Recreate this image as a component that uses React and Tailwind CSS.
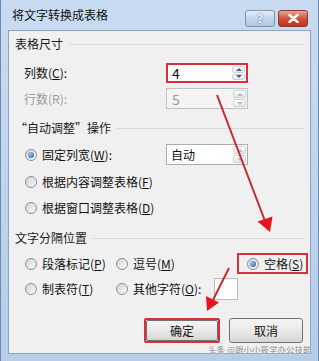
const font = { fontFamily: '"Noto Sans CJK SC", "Microsoft YaHei", sans-serif' };

function Radio({ checked }) {
  return (
    <span className="flex h-[12px] w-[12px] shrink-0 items-center justify-center rounded-full border border-[#8e8f8f] bg-gradient-to-br from-[#d2d2d2] to-[#fbfbfb]">
      {checked && (
        <span className="h-[6px] w-[6px] rounded-full bg-[radial-gradient(circle_at_35%_35%,#9cc8f0,#1a56a4)]" />
      )}
    </span>
  );
}

function Spinner({ dim }) {
  const arrow = dim ? "#b4bcc8" : "#4a5e80";
  return (
    <div className="flex h-full w-[14px] shrink-0 flex-col gap-[1px] py-[1px] pr-[1px]">
      <div className="flex flex-1 items-center justify-center rounded-[2px] border border-[#cfd3d8] bg-gradient-to-b from-white to-[#e4e6ea]">
        <span
          className="h-0 w-0 border-x-[3px] border-b-[3px] border-x-transparent"
          style={{ borderBottomColor: arrow }}
        />
      </div>
      <div className="flex flex-1 items-center justify-center rounded-[2px] border border-[#cfd3d8] bg-gradient-to-b from-white to-[#e4e6ea]">
        <span
          className="h-0 w-0 border-x-[3px] border-t-[3px] border-x-transparent"
          style={{ borderTopColor: arrow }}
        />
      </div>
    </div>
  );
}

function Heading({ children }) {
  return (
    <div className="flex h-[20px] items-center pl-[6px] pr-[6px]">
      <span className="text-[12px] text-[#1a1a1a]">{children}</span>
      <div className="ml-[6px] h-px flex-1 bg-[#d9d9d9]" />
    </div>
  );
}

export default function App() {
  return (
    <div
      className="relative h-[361px] w-[319px] overflow-hidden border-x border-[#6d89ad] bg-gradient-to-b from-[#c9dbf0] to-[#b6cde8]"
      style={font}
    >
      {/* title bar */}
      <div className="flex h-[30px] items-center pl-[11px] pr-[10px]">
        <span className="text-[12px] text-[#101010]">将文字转换成表格</span>
        <div className="ml-auto flex gap-[3px] self-start pt-[10px]">
          <div className="flex h-[17px] w-[30px] items-center justify-center rounded-[3px] border border-[#7f93ad] bg-gradient-to-b from-[#e4edf8] via-[#c4d5ea] to-[#b2c8e3] text-[11px] font-bold text-[#f4f8fc] [text-shadow:0_0_2px_#3c5474]">
            ?
          </div>
          <div className="flex h-[17px] w-[30px] items-center justify-center rounded-[3px] border border-[#8a3a32] bg-gradient-to-b from-[#e9a597] via-[#d3503a] to-[#c0321e]">
            <svg width="11" height="9" viewBox="0 0 11 9">
              <path d="M1.5 1 L9.5 8 M9.5 1 L1.5 8" stroke="#fff" strokeWidth="2.4" strokeLinecap="round" />
            </svg>
          </div>
        </div>
      </div>

      {/* client area */}
      <div className="mx-[7px] h-[324px] border border-[#8ea3be] bg-[#f0f0f0] text-[12px] text-[#111]">
        <div className="mt-[3px]">
          <Heading>表格尺寸</Heading>
        </div>

        <div className="mt-[9px] flex h-[20px] items-center pl-[15px]">
          <span className="w-[142px]">
            列数(<u>C</u>):
          </span>
          <div className="flex h-[20px] w-[82px] items-center border-2 border-[#d6313a] bg-white">
            <span className="flex-1 pl-[4px] text-[14px] leading-none">4</span>
            <Spinner />
          </div>
        </div>

        <div className="mt-[5px] flex h-[21px] items-center pl-[15px]">
          <span className="w-[142px] text-[#9d9d9d]">行数(R):</span>
          <div className="flex h-[21px] w-[82px] items-center border border-[#bfc3c8] bg-[#f4f4f4] pl-[1px]">
            <span className="flex-1 pl-[4px] text-[14px] leading-none text-[#9a9a9a]">5</span>
            <Spinner dim />
          </div>
        </div>

        <div className="mt-[9px]">
          <Heading>“自动调整”操作</Heading>
        </div>

        <div className="mt-[6px] flex h-[21px] items-center pl-[16px]">
          <div className="flex w-[141px] items-center gap-[5px]">
            <Radio checked />
            <span>
              固定列宽(<u>W</u>):
            </span>
          </div>
          <div className="flex h-[21px] w-[82px] items-center border border-[#a9adb3] bg-white">
            <span className="flex-1 pl-[4px]">自动</span>
            <Spinner dim />
          </div>
        </div>

        <div className="mt-[7px] flex h-[20px] items-center gap-[5px] pl-[16px]">
          <Radio />
          <span>
            根据内容调整表格(<u>F</u>)
          </span>
        </div>

        <div className="mt-[6px] flex h-[20px] items-center gap-[5px] pl-[16px]">
          <Radio />
          <span>
            根据窗口调整表格(<u>D</u>)
          </span>
        </div>

        <div className="mt-[10px]">
          <Heading>文字分隔位置</Heading>
        </div>

        <div className="mt-[5px] flex h-[21px] items-center pl-[16px]">
          <div className="flex w-[91px] items-center gap-[5px]">
            <Radio />
            <span>
              段落标记(<u>P</u>)
            </span>
          </div>
          <div className="flex w-[121px] items-center gap-[5px]">
            <Radio />
            <span>
              逗号(<u>M</u>)
            </span>
          </div>
          <div className="flex h-[21px] w-[71px] items-center gap-[5px] border-2 border-[#d6313a] pl-[8px]">
            <Radio checked />
            <span>
              空格(<u>S</u>)
            </span>
          </div>
        </div>

        <div className="mt-[4px] flex h-[22px] items-center pl-[16px]">
          <div className="flex w-[91px] items-center gap-[5px]">
            <Radio />
            <span>
              制表符(<u>T</u>)
            </span>
          </div>
          <div className="flex w-[98px] items-center gap-[5px]">
            <Radio />
            <span>
              其他字符(<u>O</u>):
            </span>
          </div>
          <div className="h-[22px] w-[24px] border border-[#b8bcc2] bg-white" />
        </div>

        <div className="mt-[18px] flex h-[25px] justify-end gap-[9px] pr-[7px]">
          <div className="flex w-[76px] rounded-[2px] border-2 border-[#d6313a]">
            <div className="flex flex-1 items-center justify-center rounded-[2px] border border-[#707070] bg-gradient-to-b from-[#f4f4f4] via-[#e9e9e9] to-[#d6d6d6]">
              确定
            </div>
          </div>
          <div className="flex w-[74px] items-center justify-center rounded-[3px] border border-[#707070] bg-gradient-to-b from-[#f4f4f4] via-[#e9e9e9] to-[#d6d6d6]">
            取消
          </div>
        </div>
      </div>

      {/* annotation arrows */}
      <svg className="pointer-events-none absolute left-0 top-0" width="319" height="361" viewBox="0 0 319 361">
        <line x1="216" y1="95" x2="264" y2="221" stroke="#c62a2e" strokeWidth="2" />
        <polygon points="256.5,221.5 271.5,216.5 269,232" fill="#e4151c" />
        <line x1="228" y1="268" x2="212" y2="300" stroke="#c62a2e" strokeWidth="2" />
        <polygon points="205,296 218,302.5 206,311" fill="#e4151c" />
      </svg>

      {/* watermark */}
      <span className="absolute left-[207px] top-[345px] whitespace-nowrap text-[8.5px] leading-none text-[#8c8c8c] [text-shadow:0_0_2px_#fff]">
        头条 @跟小小筱学办公技能
      </span>
    </div>
  );
}
